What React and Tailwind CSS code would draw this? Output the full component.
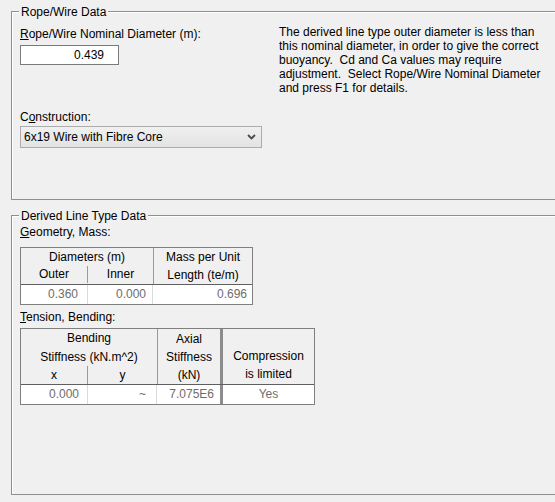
const NOTE = [
  'The derived line type outer diameter is less than',
  'this nominal diameter, in order to give the correct',
  'buoyancy.  Cd and Ca values may require',
  'adjustment.  Select Rope/Wire Nominal Diameter',
  'and press F1 for details.',
];

function GroupBox({ title, className, children }) {
  return (
    <div className={`relative flex w-[560px] flex-col border border-[#8f8f8f] ${className}`}>
      <div className="flex-1 border-t border-l border-white">
        <span className="absolute left-[7px] top-[-7px] bg-[#f0f0f0] px-[2px] leading-[14px]">{title}</span>
        {children}
      </div>
    </div>
  );
}

function Chevron() {
  return (
    <svg width="9" height="6" viewBox="0 0 9 6" className="mr-[5px]">
      <path d="M1 1 L4.5 4.5 L8 1" fill="none" stroke="#4a4a4a" strokeWidth="1.8" />
    </svg>
  );
}

function GeometryTable() {
  return (
    <div className="w-[233px] border border-[#7f7f7f]">
      <div className="flex border-b border-[#5f5f5f]">
        <div className="flex w-[132px] flex-col">
          <div className="h-[18px] text-center leading-[18px]">Diameters (m)</div>
          <div className="flex h-[17px] leading-[17px]">
            <div className="w-[67px] border-r border-[#9a9a9a] text-center">Outer</div>
            <div className="flex-1 text-center">Inner</div>
          </div>
        </div>
        <div className="flex-1 border-l border-[#9a9a9a] text-center leading-[18px]">
          Mass per Unit
          <br />
          Length (te/m)
        </div>
      </div>
      <div className="flex h-[19px] bg-white leading-[19px] text-[#6d6d6d]">
        <div className="w-[67px] border-r border-[#dadada] pr-[9px] text-right">0.360</div>
        <div className="w-[65px] border-r border-[#dadada] pr-[6px] text-right">0.000</div>
        <div className="flex-1 pr-[5px] text-right">0.696</div>
      </div>
    </div>
  );
}

function TensionTable() {
  return (
    <div className="w-[295px] border border-[#7f7f7f]">
      <div className="flex border-b border-[#5f5f5f]">
        <div className="flex w-[136px] flex-col">
          <div className="h-[19px] text-center leading-[19px]">Bending</div>
          <div className="h-[18px] text-center leading-[18px]">Stiffness (kN.m^2)</div>
          <div className="flex h-[18px] leading-[18px]">
            <div className="w-[67px] border-r border-[#9a9a9a] text-center">x</div>
            <div className="flex-1 text-center">y</div>
          </div>
        </div>
        <div className="w-[66px] border-l border-r-[3px] border-l-[#9a9a9a] border-r-[#8c8c8c] pt-[1px] text-center leading-[18px]">
          Axial
          <br />
          Stiffness
          <br />
          (kN)
        </div>
        <div className="flex flex-1 flex-col justify-end pb-[1px] text-center leading-[18px]">
          Compression
          <br />
          is limited
        </div>
      </div>
      <div className="flex h-[19px] bg-white leading-[19px] text-[#6d6d6d]">
        <div className="w-[67px] border-r border-[#dadada] pr-[8px] text-right">0.000</div>
        <div className="w-[69px] border-r border-[#dadada] pr-[10px] text-right">~</div>
        <div className="w-[66px] border-r-[3px] border-[#8c8c8c] pr-[6px] text-right">7.075E6</div>
        <div className="flex-1 text-center">Yes</div>
      </div>
    </div>
  );
}

export default function App() {
  return (
    <div className="flex h-[502px] w-[555px] flex-col overflow-hidden bg-[#f0f0f0] pb-[7px] pl-[11px] pt-[11px] font-['Liberation_Sans',Arial,sans-serif] text-[12px] text-black">
      <GroupBox title="Rope/Wire Data" className="h-[189px] shrink-0">
        <div className="flex pl-[7px]">
          <div className="w-[259px] pt-[14px]">
            <div className="leading-[14px]">
              <u>R</u>ope/Wire Nominal Diameter (m):
            </div>
            <div className="mt-[4px] h-[20px] w-[99px] border border-[#7a7a7a] bg-white pr-[14px] text-right leading-[18px]">
              0.439
            </div>
            <div className="mt-[45px] leading-[14px]">
              C<u>o</u>nstruction:
            </div>
            <div className="mt-[2px] flex h-[22px] w-[242px] items-center justify-between border border-[#acacac] bg-linear-to-b from-[#f0f0f0] to-[#e3e3e3] pl-[3px]">
              <span>6x19 Wire with Fibre Core</span>
              <Chevron />
            </div>
          </div>
          <div className="pt-[12px] leading-[14px] whitespace-pre">
            {NOTE.map((line) => (
              <div key={line}>{line}</div>
            ))}
          </div>
        </div>
      </GroupBox>

      <GroupBox title="Derived Line Type Data" className="mt-[15px] min-h-0 flex-1">
        <div className="pl-[7px] pt-[8px]">
          <div className="leading-[14px]">
            <u>G</u>eometry, Mass:
          </div>
          <div className="mt-[8px]">
            <GeometryTable />
          </div>
          <div className="mt-[5px] leading-[14px]">
            <u>T</u>ension, Bending:
          </div>
          <div className="mt-[4px]">
            <TensionTable />
          </div>
        </div>
      </GroupBox>
    </div>
  );
}
